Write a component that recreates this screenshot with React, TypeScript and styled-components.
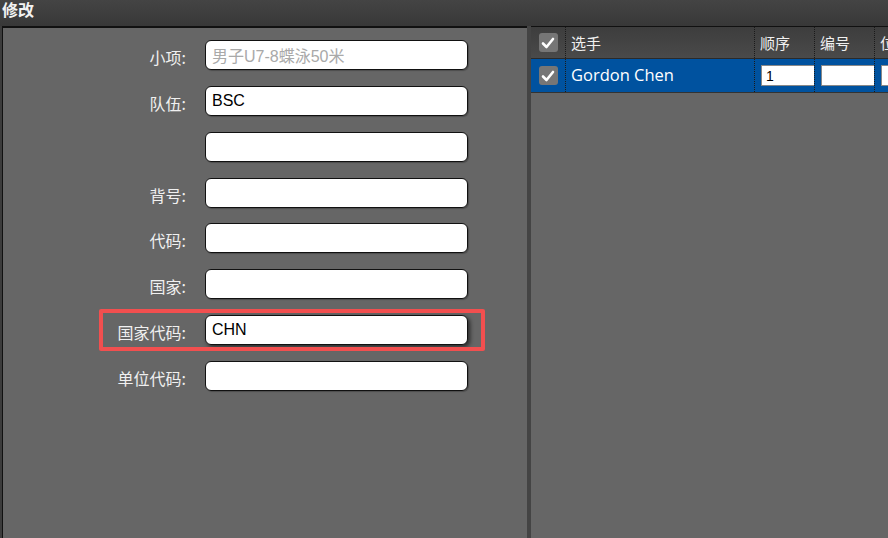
import React from "react";
import styled, { createGlobalStyle } from "styled-components";

const Global = createGlobalStyle`
  html, body { margin: 0; padding: 0; background: #3c3c3c; }
  body { font-family: "Liberation Sans", "Noto Sans CJK SC", sans-serif; }
  #root { width: 888px; height: 538px; overflow: hidden; }
`;

const Frame = styled.div`
  width: 888px;
  height: 538px;
  display: flex;
  flex-direction: column;
  background: #3c3c3c;
`;

const TitleBar = styled.div`
  height: 26px;
  flex: none;
  display: flex;
  align-items: flex-start;
  padding: 1px 0 0 2px;
  background: linear-gradient(#444, #383838);
  color: #f2f2f2;
  font-size: 16px;
  font-weight: bold;
  font-family: "Noto Sans CJK SC", sans-serif;
  line-height: 16px;
  box-sizing: border-box;
`;

const Main = styled.div`
  flex: 1;
  display: flex;
  padding-left: 2px;
  min-height: 0;
`;

const LeftPanel = styled.div`
  position: relative;
  width: 524px;
  flex: none;
  background: #666;
  border-top: 2px solid #111;
  border-left: 1px solid #111;
  padding-top: 12px;
  box-sizing: content-box;
`;

const Divider = styled.div`
  width: 4px;
  flex: none;
  background: #444;
`;

const RightPanel = styled.div`
  flex: 1;
  background: #666;
  border-top: 1px solid #111;
  overflow: hidden;
`;

const Form = styled.div`
  display: grid;
  grid-template-columns: 183px 263px;
  column-gap: 19px;
  row-gap: 15.85px;
`;

const Label = styled.div`
  text-align: right;
  color: #f0f0f0;
  font-size: 16px;
  font-family: "Noto Sans CJK SC", sans-serif;
  line-height: 30px;
  padding-top: 2px;
  height: 30px;
  box-sizing: border-box;
`;

const Field = styled.div<{ $focus?: boolean }>`
  height: 30px;
  box-sizing: border-box;
  background: #fff;
  border: 1px solid #111;
  border-radius: 6px;
  padding: 0 6px;
  display: flex;
  align-items: center;
  font-size: 16px;
  color: #000;
  box-shadow: ${(p) => (p.$focus ? "2px 2px 4px rgba(0,0,0,0.6)" : "1px 1px 1px rgba(0,0,0,0.25)")};
`;

const Placeholder = styled.span`
  color: #a9a9a9;
  font-family: "Liberation Sans", "Noto Sans CJK SC", sans-serif;
`;

const Highlight = styled.div`
  position: absolute;
  left: 96px;
  top: 281px;
  width: 378px;
  height: 34px;
  border: 4px solid #f24f4f;
  border-radius: 2px;
  pointer-events: none;
`;

const Table = styled.div`
  display: flex;
  flex-direction: column;
`;

const Row = styled.div<{ $head?: boolean }>`
  display: grid;
  grid-template-columns: 35px 189px 60px 60px 60px;
  height: ${(p) => (p.$head ? "31px" : "33px")};
  background: ${(p) => (p.$head ? "linear-gradient(#3d3d3d, #4a4a4a)" : "#00529f")};
  border-bottom: 1px solid ${(p) => (p.$head ? "#2a2a2a" : "#333")};
  color: #f4f4f4;
`;

const Cell = styled.div<{ $center?: boolean; $last?: boolean }>`
  display: flex;
  align-items: center;
  justify-content: ${(p) => (p.$center ? "center" : "flex-start")};
  padding-left: ${(p) => (p.$center ? "0" : "5px")};
  border-right: ${(p) => (p.$last ? "none" : "1px dotted #1a1a1a")};
  font-size: 15px;
  overflow: hidden;
  white-space: nowrap;
`;

const HeadText = styled.span`
  font-family: "Noto Sans CJK SC", sans-serif;
  font-size: 15px;
  color: #f0f0f0;
`;

const NameText = styled.span`
  font-family: "Open Sans", "Noto Sans CJK SC", sans-serif;
  font-size: 16.5px;
  color: #fff;
  margin-top: -2px;
`;

const CellInput = styled.div`
  width: 54px;
  height: 21px;
  flex: none;
  box-sizing: border-box;
  background: #fff;
  border: 1px solid #888;
  color: #000;
  font-size: 14px;
  display: flex;
  align-items: center;
  padding-left: 4px;
  margin-left: 1px;
`;

const Box = styled.div`
  width: 19px;
  height: 19px;
  border-radius: 3px;
  background: #767676;
  display: flex;
  align-items: center;
  justify-content: center;
`;

const Check = () => (
  <Box>
    <svg width="14" height="14" viewBox="0 0 14 14">
      <path d="M2 7.5 L5.5 11 L12 3" fill="none" stroke="#fff" strokeWidth="2.6" strokeLinecap="round" strokeLinejoin="round" />
    </svg>
  </Box>
);

const fields: { label: string; value?: string; placeholder?: string; focus?: boolean }[] = [
  { label: "小项:", placeholder: "男子U7-8蝶泳50米" },
  { label: "队伍:", value: "BSC" },
  { label: "" },
  { label: "背号:" },
  { label: "代码:" },
  { label: "国家:" },
  { label: "国家代码:", value: "CHN", focus: true },
  { label: "单位代码:" },
];

export default function App() {
  return (
    <Frame>
      <Global />
      <TitleBar>修改</TitleBar>
      <Main>
        <LeftPanel>
          <Form>
            {fields.map((f, i) => (
              <React.Fragment key={i}>
                <Label>{f.label}</Label>
                <Field $focus={f.focus}>
                  {f.value ? f.value : f.placeholder ? <Placeholder>{f.placeholder}</Placeholder> : null}
                </Field>
              </React.Fragment>
            ))}
          </Form>
          <Highlight />
        </LeftPanel>
        <Divider />
        <RightPanel>
          <Table>
            <Row $head>
              <Cell $center><Check /></Cell>
              <Cell><HeadText>选手</HeadText></Cell>
              <Cell><HeadText>顺序</HeadText></Cell>
              <Cell><HeadText>编号</HeadText></Cell>
              <Cell $last><HeadText>位置</HeadText></Cell>
            </Row>
            <Row>
              <Cell $center><Check /></Cell>
              <Cell><NameText>Gordon Chen</NameText></Cell>
              <Cell><CellInput>1</CellInput></Cell>
              <Cell><CellInput /></Cell>
              <Cell $last><CellInput /></Cell>
            </Row>
          </Table>
        </RightPanel>
      </Main>
    </Frame>
  );
}
